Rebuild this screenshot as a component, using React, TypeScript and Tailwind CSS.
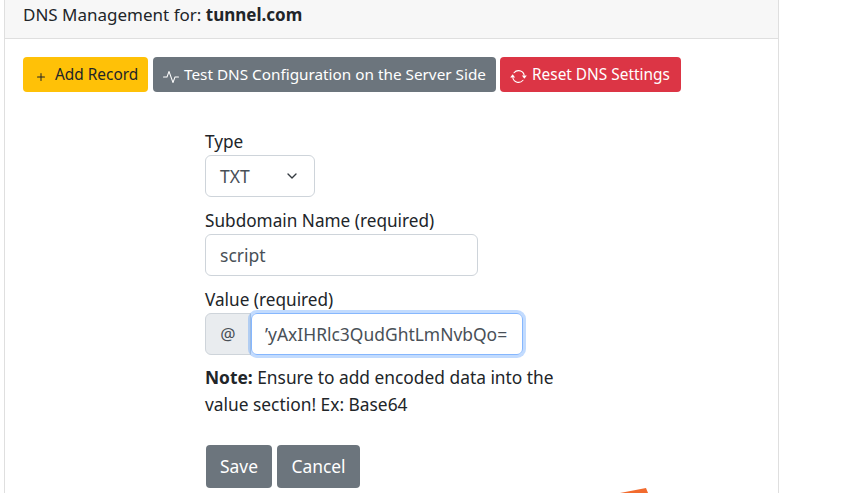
import { BsActivity, BsArrowRepeat, BsPlus } from 'react-icons/bs'
import { ChevronDown } from 'lucide-react'

export default function App() {
  return (
    <div className="relative h-[493px] w-[849px] overflow-hidden bg-white font-['Noto_Sans',sans-serif] text-[17px] text-[#212529]">
      <div className="ml-[4px] h-[493px] w-[775px] border-x border-[#dfdfdf]">
        <div className="flex h-[39px] items-start border-b border-[#dfdfdf] bg-[#f7f7f7] pl-[18px] pt-[3px] text-[17px] leading-[24px]">
          <span>
            DNS Management for: <b>tunnel.com</b>
          </span>
        </div>
        <div className="px-[18px] pt-[18px]">
          <div className="flex">
            <button className="flex h-[35px] w-[125px] items-center rounded-[4px] bg-[#ffc107] pl-[10px] text-[15.4px] text-[#212529]">
              <BsPlus size={16} className="mr-[6px] translate-y-[2px]" />
              Add Record
            </button>
            <button className="ml-[5px] flex h-[35px] w-[343px] items-center rounded-[4px] bg-[#6c757d] pl-[10px] text-[15.3px] text-white">
              <BsActivity size={16} className="mr-[5px] translate-y-[2px]" />
              Test DNS Configuration on the Server Side
            </button>
            <button className="ml-[4px] flex h-[35px] w-[181px] items-center rounded-[4px] bg-[#dc3545] pl-[10px] text-[15.4px] text-white">
              <BsArrowRepeat size={17} className="mr-[5px] translate-y-[2px]" />
              Reset DNS Settings
            </button>
          </div>
          <form className="ml-[182px] mt-[36px] w-[360px]">
            <label className="block h-[27px] text-[17.2px] leading-[27px]">Type</label>
            <div className="flex h-[42px] w-[110px] items-center justify-between rounded-[6px] border border-[#ced4da] px-[14px] text-[17.5px] text-[#495057]">
              TXT
              <ChevronDown size={16} strokeWidth={2} className="text-[#343a40]" />
            </div>
            <label className="mt-[10px] block h-[27px] text-[17.2px] leading-[27px]">Subdomain Name (required)</label>
            <input
              readOnly
              value="script"
              className="block h-[42px] w-[273px] rounded-[6px] border border-[#ced4da] px-[14px] text-[17.5px] text-[#495057] outline-none"
            />
            <label className="mt-[10px] block h-[27px] text-[17.2px] leading-[27px]">Value (required)</label>
            <div className="flex h-[42px] w-[318px]">
              <span className="flex w-[46px] items-center justify-center rounded-l-[6px] border border-[#ced4da] bg-[#e9ecef] text-[#495057]">
                @
              </span>
              <div className="flex w-[272px] items-center overflow-hidden rounded-[6px] border border-[#86b7fe] pl-[13px] text-[17.45px] text-[#495057] shadow-[0_0_0_3px_rgba(13,110,253,0.25)]">
                <span className="whitespace-nowrap">’yAxIHRlc3QudGhtLmNvbQo=</span>
              </div>
            </div>
            <p className="mt-[9px] w-[360px] text-[17.35px] leading-[27px]">
              <b>Note:</b> Ensure to add encoded data into the value section! Ex: Base64
            </p>
            <div className="ml-[1px] mt-[27px] flex gap-[5px]">
              <button type="button" className="h-[43px] w-[66px] rounded-[4px] bg-[#6c757d] text-[17.4px] text-white">
                Save
              </button>
              <button type="button" className="h-[43px] w-[83px] rounded-[4px] bg-[#6c757d] text-[17.4px] text-white">
                Cancel
              </button>
            </div>
          </form>
        </div>
      </div>
      <svg className="absolute left-[618px] top-[486px]" width="32" height="7" viewBox="0 0 32 7">
        <path d="M2 7 L28 2 L30 7 Z" fill="#f26b2e" />
      </svg>
    </div>
  )
}
